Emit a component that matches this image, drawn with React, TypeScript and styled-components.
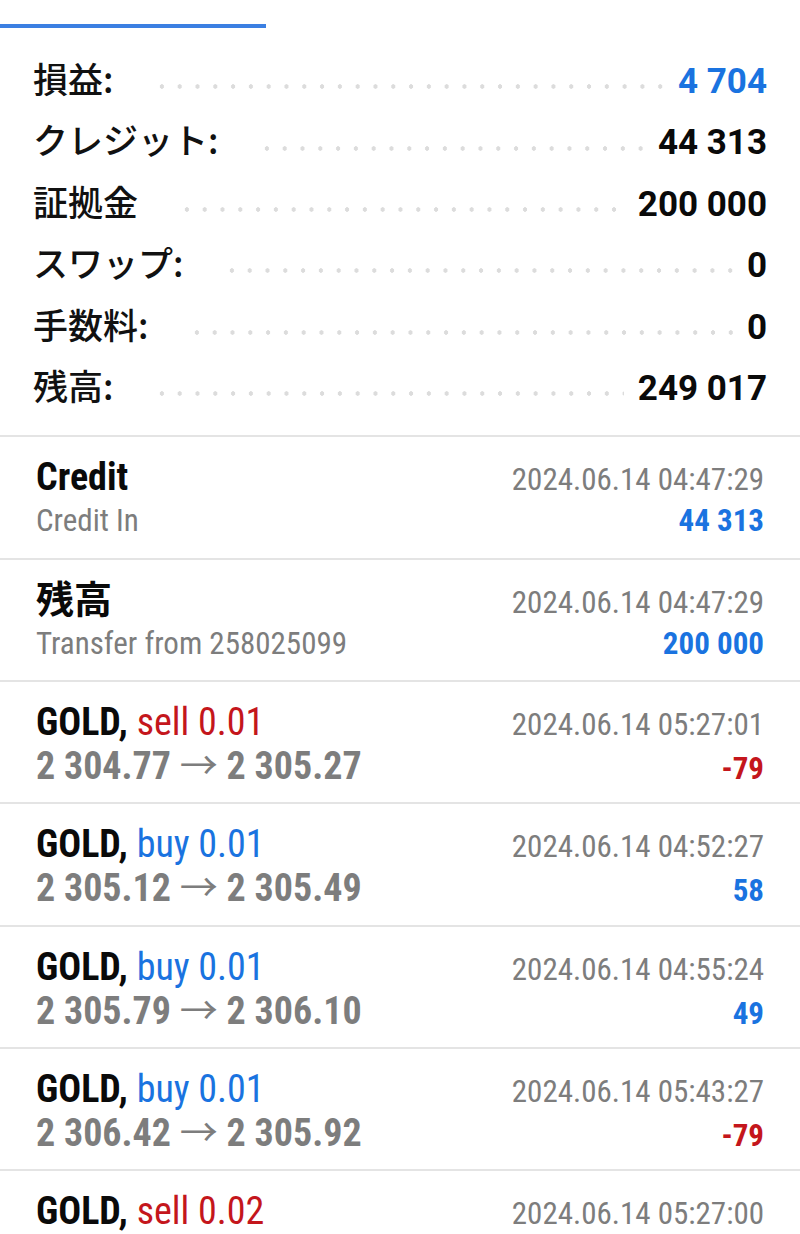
import React from 'react';
import styled, { createGlobalStyle } from 'styled-components';

const Global = createGlobalStyle`
  body {
    margin: 0;
    background: #fff;
    font-family: 'Roboto Condensed', Roboto, 'Noto Sans CJK JP', sans-serif;
  }
`;

const BLUE = '#1a73e0';
const RED = '#c4161c';
const GREY = '#7d7d7d';

const Page = styled.div`
  width: 800px;
  padding-top: 24px;
`;

const TabIndicator = styled.div`
  width: 266px;
  height: 4px;
  background: #3b7fe2;
`;

const Summary = styled.section`
  padding: 19px 33px 20px 33px;
  border-bottom: 2px solid #e4e4e4;
`;

const SummaryRow = styled.div`
  display: flex;
  align-items: baseline;
  height: 61.4px;
  line-height: 61.4px;
`;

const Label = styled.span`
  font-family: 'Noto Sans CJK JP', sans-serif;
  font-size: 35px;
  font-weight: 500;
  color: #111;
  white-space: nowrap;
`;

const Leader = styled.span`
  flex: 1;
  height: 5px;
  margin: 0 14px 0 40px;
  align-self: center;
  transform: translateY(9px);
  background-image: radial-gradient(circle, #dcdcdc 2px, transparent 2.5px);
  background-size: 17.8px 5px;
  background-repeat: repeat-x;
`;

const Value = styled.span<{ $blue?: boolean }>`
  font-family: Roboto, sans-serif;
  font-weight: 700;
  font-size: 35px;
  color: ${(p) => (p.$blue ? BLUE : '#0a0a0a')};
  white-space: nowrap;
`;

const Deal = styled.article`
  padding: 18px 36px 0 36px;
  height: 122.3px;
  box-sizing: border-box;
  border-bottom: 2px solid #e4e4e4;
`;

const Line = styled.div`
  display: flex;
  justify-content: space-between;
  align-items: baseline;
  height: 44px;
  line-height: 44px;
  white-space: nowrap;
`;

const Title = styled.span`
  font-size: 38px;
  font-weight: 700;
  color: #0a0a0a;
`;

const Action = styled.span<{ $sell?: boolean }>`
  font-weight: 400;
  color: ${(p) => (p.$sell ? RED : BLUE)};
`;

const Sub = styled.span`
  font-size: 31px;
  color: ${GREY};
`;

const Prices = styled.span`
  font-size: 38px;
  font-weight: 700;
  color: ${GREY};
`;

const Arrow = styled.span`
  font-weight: 400;
`;

const Time = styled.span`
  font-size: 31px;
  color: ${GREY};
`;

const Amount = styled.span<{ $neg?: boolean }>`
  font-size: 31px;
  font-weight: 700;
  color: ${(p) => (p.$neg ? RED : BLUE)};
`;

const summary = [
  { label: '損益:', value: '4 704', blue: true },
  { label: 'クレジット:', value: '44 313' },
  { label: '証拠金', value: '200 000' },
  { label: 'スワップ:', value: '0' },
  { label: '手数料:', value: '0' },
  { label: '残高:', value: '249 017' },
];

type Row =
  | { kind: 'op'; title: string; sub: string; time: string; amount: string }
  | { kind: 'trade'; side: 'buy' | 'sell'; lot: string; from: string; to: string; time: string; amount?: string };

const rows: Row[] = [
  { kind: 'op', title: 'Credit', sub: 'Credit In', time: '2024.06.14 04:47:29', amount: '44 313' },
  { kind: 'op', title: '残高', sub: 'Transfer from 258025099', time: '2024.06.14 04:47:29', amount: '200 000' },
  { kind: 'trade', side: 'sell', lot: '0.01', from: '2 304.77', to: '2 305.27', time: '2024.06.14 05:27:01', amount: '-79' },
  { kind: 'trade', side: 'buy', lot: '0.01', from: '2 305.12', to: '2 305.49', time: '2024.06.14 04:52:27', amount: '58' },
  { kind: 'trade', side: 'buy', lot: '0.01', from: '2 305.79', to: '2 306.10', time: '2024.06.14 04:55:24', amount: '49' },
  { kind: 'trade', side: 'buy', lot: '0.01', from: '2 306.42', to: '2 305.92', time: '2024.06.14 05:43:27', amount: '-79' },
  { kind: 'trade', side: 'sell', lot: '0.02', from: '', to: '', time: '2024.06.14 05:27:00' },
];

export default function App() {
  return (
    <Page>
      <Global />
      <TabIndicator />
      <Summary>
        {summary.map((s) => (
          <SummaryRow key={s.label}>
            <Label>{s.label}</Label>
            <Leader />
            <Value $blue={s.blue}>{s.value}</Value>
          </SummaryRow>
        ))}
      </Summary>
      {rows.map((r, i) =>
        r.kind === 'op' ? (
          <Deal key={i}>
            <Line>
              <Title>{r.title}</Title>
              <Time>{r.time}</Time>
            </Line>
            <Line>
              <Sub>{r.sub}</Sub>
              <Amount>{r.amount}</Amount>
            </Line>
          </Deal>
        ) : (
          <Deal key={i}>
            <Line>
              <Title>
                GOLD, <Action $sell={r.side === 'sell'}>{r.side} {r.lot}</Action>
              </Title>
              <Time>{r.time}</Time>
            </Line>
            {r.from && (
              <Line>
                <Prices>
                  {r.from} <Arrow>→</Arrow> {r.to}
                </Prices>
                <Amount $neg={r.amount?.startsWith('-')}>{r.amount}</Amount>
              </Line>
            )}
          </Deal>
        ),
      )}
    </Page>
  );
}
